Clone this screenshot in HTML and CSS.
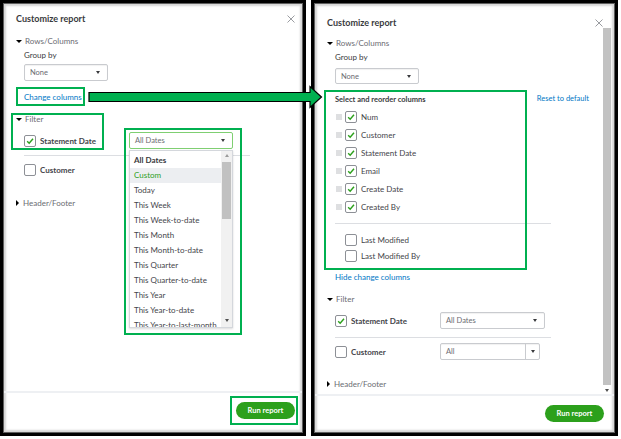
FILE: index.html
```html
<!DOCTYPE html>
<html>
<head>
<meta charset="utf-8">
<link rel="stylesheet" href="styles.css">
</head>
<body>
<div class="stage">
  <div class="frame frame-left">
    <div class="dialog">
      <div class="dlg-main">
        <div class="dlg-content">
          <div class="dlg-head">
            <h1 class="title">Customize report</h1>
            <svg class="close" viewBox="0 0 8 8"><path d="M0.5 0.5 L7.5 7.5 M7.5 0.5 L0.5 7.5" stroke="#9a9ca1" stroke-width="1" fill="none"/></svg>
          </div>
          <div class="section"><span class="tri-down"></span>Rows/Columns</div>
          <div class="indent">
            <div class="field-label">Group by</div>
            <div class="select sel-group"><span>None</span><span class="caret"></span></div>
            <a class="link link-cc">Change columns</a>
          </div>
          <div class="section sec-filter"><span class="tri-down"></span>Filter</div>
          <div class="indent">
            <div class="frow frow-first">
              <span class="cb on"><svg viewBox="0 0 12 12"><path d="M2.6 6.3 L5 8.6 L9.6 3.2" fill="none" stroke="#2ca01c" stroke-width="1.7"/></svg></span>
              <span class="flabel">Statement Date</span>
            </div>
            <div class="divider div-left"></div>
            <div class="frow">
              <span class="cb"></span>
              <span class="flabel">Customer</span>
            </div>
          </div>
          <div class="section sec-hf"><span class="tri-right"></span>Header/Footer</div>
        </div>
      </div>
      <div class="dlg-foot">
        <button class="btn">Run report</button>
      </div>
    </div>

    <div class="menu">
      <div class="select sel-menu"><span>All Dates</span><span class="caret"></span></div>
      <div class="menu-list">
        <ul class="menu-items">
          <li class="mi-first">All Dates</li>
          <li class="mi-active">Custom</li>
          <li>Today</li>
          <li>This Week</li>
          <li>This Week-to-date</li>
          <li>This Month</li>
          <li>This Month-to-date</li>
          <li>This Quarter</li>
          <li>This Quarter-to-date</li>
          <li>This Year</li>
          <li>This Year-to-date</li>
          <li>This Year-to-last-month</li>
        </ul>
        <div class="mscroll">
          <span class="arr-up"></span>
          <span class="mthumb"></span>
          <span class="mtrack"></span>
          <span class="arr-down"></span>
        </div>
      </div>
    </div>
  </div>

  <div class="frame frame-right">
    <div class="dialog">
      <div class="dlg-main">
        <div class="dlg-content content-right">
          <div class="dlg-head head-right">
            <h1 class="title">Customize report</h1>
            <svg class="close" viewBox="0 0 8 8"><path d="M0.5 0.5 L7.5 7.5 M7.5 0.5 L0.5 7.5" stroke="#9a9ca1" stroke-width="1" fill="none"/></svg>
          </div>
          <div class="section sec-rc-right"><span class="tri-down"></span>Rows/Columns</div>
          <div class="indent">
            <div class="field-label">Group by</div>
            <div class="select sel-group sel-group-right"><span>None</span><span class="caret"></span></div>
            <div class="cols-head">
              <span class="cols-title">Select and reorder columns</span>
              <a class="link link-reset">Reset to default</a>
            </div>
            <ul class="cols">
              <li><svg class="drag" viewBox="0 0 6 6"><g fill="#a3a6ab"><circle cx="1" cy="1" r=".7"/><circle cx="3" cy="1" r=".7"/><circle cx="5" cy="1" r=".7"/><circle cx="1" cy="3" r=".7"/><circle cx="3" cy="3" r=".7"/><circle cx="5" cy="3" r=".7"/><circle cx="1" cy="5" r=".7"/><circle cx="3" cy="5" r=".7"/><circle cx="5" cy="5" r=".7"/></g></svg><span class="cb on"><svg viewBox="0 0 12 12"><path d="M2.6 6.3 L5 8.6 L9.6 3.2" fill="none" stroke="#2ca01c" stroke-width="1.7"/></svg></span>Num</li>
              <li><svg class="drag" viewBox="0 0 6 6"><g fill="#a3a6ab"><circle cx="1" cy="1" r=".7"/><circle cx="3" cy="1" r=".7"/><circle cx="5" cy="1" r=".7"/><circle cx="1" cy="3" r=".7"/><circle cx="3" cy="3" r=".7"/><circle cx="5" cy="3" r=".7"/><circle cx="1" cy="5" r=".7"/><circle cx="3" cy="5" r=".7"/><circle cx="5" cy="5" r=".7"/></g></svg><span class="cb on"><svg viewBox="0 0 12 12"><path d="M2.6 6.3 L5 8.6 L9.6 3.2" fill="none" stroke="#2ca01c" stroke-width="1.7"/></svg></span>Customer</li>
              <li><svg class="drag" viewBox="0 0 6 6"><g fill="#a3a6ab"><circle cx="1" cy="1" r=".7"/><circle cx="3" cy="1" r=".7"/><circle cx="5" cy="1" r=".7"/><circle cx="1" cy="3" r=".7"/><circle cx="3" cy="3" r=".7"/><circle cx="5" cy="3" r=".7"/><circle cx="1" cy="5" r=".7"/><circle cx="3" cy="5" r=".7"/><circle cx="5" cy="5" r=".7"/></g></svg><span class="cb on"><svg viewBox="0 0 12 12"><path d="M2.6 6.3 L5 8.6 L9.6 3.2" fill="none" stroke="#2ca01c" stroke-width="1.7"/></svg></span>Statement Date</li>
              <li><svg class="drag" viewBox="0 0 6 6"><g fill="#a3a6ab"><circle cx="1" cy="1" r=".7"/><circle cx="3" cy="1" r=".7"/><circle cx="5" cy="1" r=".7"/><circle cx="1" cy="3" r=".7"/><circle cx="3" cy="3" r=".7"/><circle cx="5" cy="3" r=".7"/><circle cx="1" cy="5" r=".7"/><circle cx="3" cy="5" r=".7"/><circle cx="5" cy="5" r=".7"/></g></svg><span class="cb on"><svg viewBox="0 0 12 12"><path d="M2.6 6.3 L5 8.6 L9.6 3.2" fill="none" stroke="#2ca01c" stroke-width="1.7"/></svg></span>Email</li>
              <li><svg class="drag" viewBox="0 0 6 6"><g fill="#a3a6ab"><circle cx="1" cy="1" r=".7"/><circle cx="3" cy="1" r=".7"/><circle cx="5" cy="1" r=".7"/><circle cx="1" cy="3" r=".7"/><circle cx="3" cy="3" r=".7"/><circle cx="5" cy="3" r=".7"/><circle cx="1" cy="5" r=".7"/><circle cx="3" cy="5" r=".7"/><circle cx="5" cy="5" r=".7"/></g></svg><span class="cb on"><svg viewBox="0 0 12 12"><path d="M2.6 6.3 L5 8.6 L9.6 3.2" fill="none" stroke="#2ca01c" stroke-width="1.7"/></svg></span>Create Date</li>
              <li><svg class="drag" viewBox="0 0 6 6"><g fill="#a3a6ab"><circle cx="1" cy="1" r=".7"/><circle cx="3" cy="1" r=".7"/><circle cx="5" cy="1" r=".7"/><circle cx="1" cy="3" r=".7"/><circle cx="3" cy="3" r=".7"/><circle cx="5" cy="3" r=".7"/><circle cx="1" cy="5" r=".7"/><circle cx="3" cy="5" r=".7"/><circle cx="5" cy="5" r=".7"/></g></svg><span class="cb on"><svg viewBox="0 0 12 12"><path d="M2.6 6.3 L5 8.6 L9.6 3.2" fill="none" stroke="#2ca01c" stroke-width="1.7"/></svg></span>Created By</li>
            </ul>
            <div class="divider div-right div-cols"></div>
            <ul class="cols cols-off">
              <li><span class="drag-space"></span><span class="cb"></span>Last Modified</li>
              <li><span class="drag-space"></span><span class="cb"></span>Last Modified By</li>
            </ul>
            <a class="link link-hide">Hide change columns</a>
          </div>
          <div class="section sec-filter-right"><span class="tri-down"></span>Filter</div>
          <div class="indent">
            <div class="frow frow-right frow-right-first">
              <span class="fcell">
                <span class="cb on"><svg viewBox="0 0 12 12"><path d="M2.6 6.3 L5 8.6 L9.6 3.2" fill="none" stroke="#2ca01c" stroke-width="1.7"/></svg></span>
                <span class="flabel">Statement Date</span>
              </span>
              <div class="select sel-filter"><span>All Dates</span><span class="caret"></span></div>
            </div>
            <div class="divider div-right div-filter"></div>
            <div class="frow frow-right frow-right-second">
              <span class="fcell">
                <span class="cb"></span>
                <span class="flabel">Customer</span>
              </span>
              <div class="select sel-combo"><span class="combo-text">All</span><span class="combo-btn"><span class="caret"></span></span></div>
            </div>
          </div>
          <div class="section sec-hf-right"><span class="tri-right"></span>Header/Footer</div>
        </div>
        <div class="vscroll">
          <span class="vthumb"></span>
          <span class="arr-down"></span>
        </div>
      </div>
      <div class="dlg-foot foot-right">
        <button class="btn">Run report</button>
      </div>
    </div>
  </div>

  <div class="mark mark-cc"></div>
  <div class="mark mark-filter"></div>
  <div class="mark mark-menu"></div>
  <div class="mark mark-run"></div>
  <div class="mark mark-cols"></div>
  <svg class="arrow" viewBox="0 0 236 24" width="236" height="24">
    <polygon points="1,7.5 222,7.5 222,1.5 233.5,12 222,22.5 222,16.5 1,16.5" fill="#00b050" stroke="#000" stroke-width="1.2"/>
  </svg>
</div>
</body>
</html>
```

FILE: styles.css
```css
* { box-sizing: border-box; margin: 0; padding: 0; }
html, body { width: 621px; height: 439px; overflow: hidden; background: #fff; }
body { font-family: Lato, "Liberation Sans", sans-serif; font-size: 8px; color: #393a3d; }
ul { list-style: none; }
a { text-decoration: none; }
button { font-family: inherit; border: 0; }

.stage { position: relative; width: 621px; height: 439px; display: flex; gap: 5px; }

.frame { position: relative; height: 436px; border: 3px solid #000; flex: none; }
.frame-left { width: 306px; }
.frame-right { width: 307px; }

.dialog {
  height: 100%;
  display: flex;
  flex-direction: column;
  border: 1px solid #5e5e5e;
  box-shadow: inset 0 0 2px 2px #d6d6d6;
  background: #fff;
}
.dlg-main { flex: 1; display: flex; min-height: 0; }
.dlg-content { flex: 1; padding: 9px 7px 0 12px; }
.content-right { padding-right: 0; padding-top: 13px; }

.dlg-head { display: flex; justify-content: space-between; align-items: center; height: 12px; }
.title { font-size: 9px; font-weight: 700; color: #393a3d; line-height: 12px; }
.close { width: 8px; height: 8px; }

.section { display: flex; align-items: center; height: 10px; line-height: 10px; color: #6b6c72; margin-top: 11px; }
.sec-filter { margin-top: 12px; }
.sec-hf { margin-top: 22px; }
.sec-rc-right { margin-top: 9px; }
.sec-filter-right { margin-top: 12px; }
.sec-hf-right { margin-top: 19px; }

.tri-down { width: 0; height: 0; border-left: 3px solid transparent; border-right: 3px solid transparent; border-top: 3.5px solid #000; margin-right: 3px; }
.tri-right { width: 0; height: 0; border-top: 3px solid transparent; border-bottom: 3px solid transparent; border-left: 3.5px solid #000; margin-right: 4px; }

.indent { padding-left: 8px; }
.field-label { line-height: 10px; height: 10px; margin-top: 4px; color: #393a3d; }

.select {
  display: flex;
  align-items: center;
  justify-content: space-between;
  height: 17px;
  border: 1px solid #c9cbcf;
  border-radius: 2px;
  box-shadow: inset 0 1px 1px rgba(0,0,0,0.06);
  padding: 0 7px 0 5px;
  color: #6b6c72;
  background: #fff;
  font-size: 7.5px;
}
.caret { width: 0; height: 0; border-left: 2.5px solid transparent; border-right: 2.5px solid transparent; border-top: 3px solid #393a3d; }
.sel-group { width: 84px; margin-top: 4px; }
.sel-group-right { margin-top: 6px; height: 16px; }

.link { display: block; color: #0077c5; line-height: 10px; height: 10px; }
.link-cc { margin-top: 11px; }
.link-hide { margin-top: 10px; }
.link-reset { font-size: 7.5px; }

.frow { display: flex; align-items: center; height: 13px; }
.frow-first { margin-top: 10px; }
.cb { flex: none; width: 12px; height: 12px; border: 1px solid #8d9096; border-radius: 2px; background: #fff; display: flex; align-items: center; justify-content: center; }
.cb svg { width: 12px; height: 12px; }
.flabel { margin-left: 4px; font-weight: 700; color: #44454a; }

.divider { height: 1px; background: #dcdee2; }
.div-left { width: 226px; margin: 8px 0 7px; }
.div-right { width: 216px; }
.div-cols { margin: 10px 0 10px; }
.div-filter { margin: 8px 0 5px; }

.dlg-foot {
  flex: none;
  height: 41px;
  border-top: 2px solid #eef0f3;
  display: flex;
  justify-content: flex-end;
  align-items: flex-start;
  padding: 9px 7px 0 0;
}
.foot-right { height: 38px; padding: 9px 10px 0 0; }
.btn {
  width: 59px;
  height: 17px;
  border-radius: 9px;
  background: #2ca01c;
  color: #fff;
  font-weight: 700;
  font-size: 7.5px;
  line-height: 17px;
  text-align: center;
}

/* menu overlay */
.menu { position: absolute; left: 126px; top: 129px; width: 104px; }
.sel-menu { border-color: #7fcf72; box-shadow: none; color: #6b6c72; }
.menu-list {
  margin-top: 1px;
  height: 178px;
  display: flex;
  border: 1px solid #d4d7dc;
  background: #fff;
  overflow: hidden;
  box-shadow: 0 1px 2px rgba(0,0,0,0.15);
}
.menu-items { flex: 1; padding-top: 2px; }
.menu-items li { height: 15px; line-height: 15px; padding-left: 4px; color: #44454a; white-space: nowrap; }
.menu-items .mi-first { font-weight: 700; color: #393a3d; }
.menu-items .mi-active { background: #eceef1; color: #2ca01c; }
.mscroll { width: 11px; flex: none; display: flex; flex-direction: column; align-items: center; background: #f1f1f1; }
.arr-up { margin-top: 3px; width: 0; height: 0; border-left: 2.5px solid transparent; border-right: 2.5px solid transparent; border-bottom: 3px solid #9b9b9b; }
.mthumb { margin-top: 5px; width: 9px; height: 57px; background: #c1c1c1; }
.mtrack { flex: 1; }
.arr-down { margin-bottom: 5px; width: 0; height: 0; border-left: 2.5px solid transparent; border-right: 2.5px solid transparent; border-top: 3px solid #505050; }

/* right panel */
.cols-head { display: flex; justify-content: space-between; align-items: center; height: 10px; margin-top: 10px; width: 254px; }
.cols-title { font-weight: 700; color: #393a3d; font-size: 7.5px; }
.cols { margin-top: 7px; }
.cols li { display: flex; align-items: center; height: 12px; margin-bottom: 6px; color: #44454a; }
.cols li:last-child { margin-bottom: 0; }
.cols-off { margin-top: 0; }
.cols-off li { margin-bottom: 4px; }
.drag { flex: none; width: 6px; height: 6px; margin: 0 3px 0 1px; }
.drag-space { width: 10px; }
.cols .cb { margin-right: 4px; }

.frow-right { height: 17px; }
.frow-right-first { margin-top: 8px; }
.fcell { width: 105px; display: flex; align-items: center; }
.sel-filter { width: 105px; }
.sel-combo { width: 100px; padding: 0; }
.combo-text { flex: 1; padding-left: 5px; }
.combo-btn { width: 14px; height: 100%; border-left: 1px solid #c9cbcf; display: flex; align-items: center; justify-content: center; }

.vscroll { width: 8px; flex: none; margin: 24px 3px 0 0; display: flex; flex-direction: column; align-items: center; }
.vthumb { flex: 1; width: 8px; background: #c2c2c2; }
.vscroll .arr-down { margin: 4px 0 2px; border-top-color: #505050; }

/* annotations */
.mark { position: absolute; border: 2px solid #00b050; }
.mark-cc { left: 16px; top: 87px; width: 69px; height: 19px; }
.mark-filter { left: 11px; top: 113px; width: 93px; height: 37px; }
.mark-menu { left: 124px; top: 128px; width: 118px; height: 207px; }
.mark-run { left: 230px; top: 396px; width: 68px; height: 29px; }
.mark-cols { left: 324px; top: 90px; width: 203px; height: 180px; }
.arrow { position: absolute; left: 88px; top: 85px; }
```
